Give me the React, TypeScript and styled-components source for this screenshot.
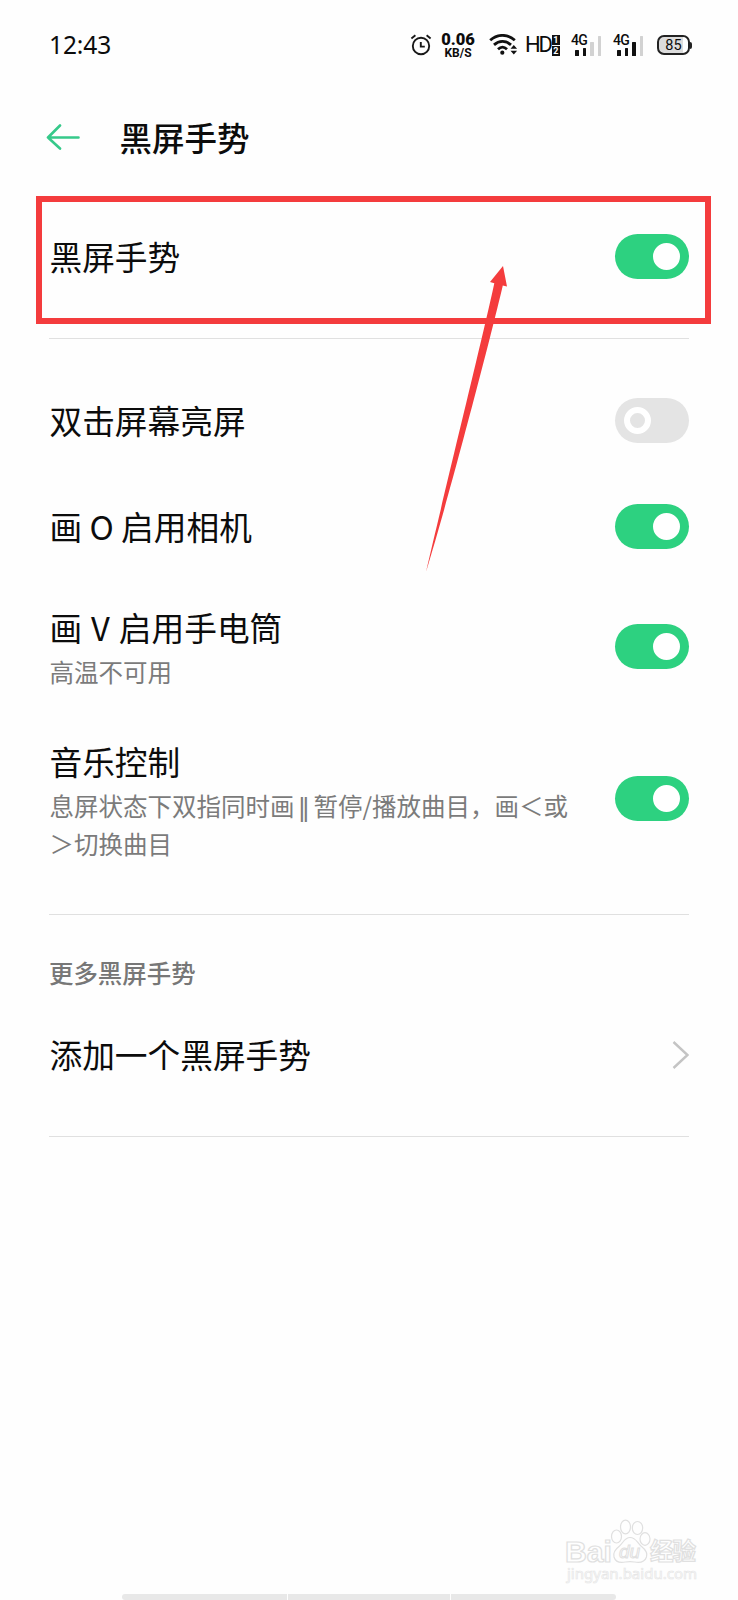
import React, { useState } from "react";
import styled, { createGlobalStyle, css } from "styled-components";

const GlobalStyle = createGlobalStyle`
  *, *::before, *::after { box-sizing: border-box; }
  body {
    margin: 0;
    background: #fefefe;
    color: #0c0c0c;
    font-family: "Noto Sans CJK SC", "Noto Sans", sans-serif;
  }
`;

const Screen = styled.main`
  position: relative;
  display: flex;
  flex-direction: column;
  width: 738px;
  height: 1600px;
  overflow: hidden;
  background: #fefefe;
`;

const StatusBar = styled.header`
  display: flex;
  align-items: center;
  justify-content: space-between;
  height: 90px;
  padding: 0 46px 0 49px;
`;

const Clock = styled.time`
  font: 400 24.5px/30px "Noto Sans", sans-serif;
  letter-spacing: -0.1px;
`;

const Indicators = styled.div`
  display: flex;
  align-items: center;
`;

const NetSpeed = styled.div`
  display: flex;
  flex-direction: column;
  align-items: center;
  width: 34px;
  margin: 1px 14px 0 9px;
  font: 700 12px/12px Roboto, sans-serif;
  strong {
    font-size: 16.5px;
    line-height: 14px;
  }
`;

const Voice = styled.div`
  display: flex;
  align-items: center;
  width: 35px;
  margin: 0 11px 0 6px;
  font: 400 22px/24px Roboto, sans-serif;
  letter-spacing: -2.2px;
`;

const SimSlots = styled.div`
  display: flex;
  flex-direction: column;
  gap: 1px;
  margin-left: 1px;
  letter-spacing: 0;
`;

const SimSlot = styled.span`
  width: 8px;
  height: 10px;
  background: #111;
  color: #fff;
  font: 700 9px/10px Roboto, sans-serif;
  text-align: center;
`;

const Signal = styled.div`
  display: grid;
  width: 32px;
  height: 22px;
  margin-right: 10px;
  > * { grid-area: 1 / 1; }
`;

const SignalType = styled.span`
  font: 500 14px/12px Roboto, sans-serif;
  letter-spacing: -0.8px;
`;

const SignalBars = styled.div`
  display: flex;
  align-items: flex-end;
  align-self: end;
  gap: 4px;
  padding-left: 4px;
`;

const Bar = styled.i<{ $h: number; $on: boolean }>`
  width: 3.6px;
  height: ${(p) => p.$h}px;
  border-radius: 0.5px;
  background: ${(p) => (p.$on ? "#111" : "#d2d2d2")};
`;

const Battery = styled.div`
  display: flex;
  align-items: center;
  margin-left: 2px;
  &::after {
    content: "";
    width: 2px;
    height: 7px;
    border-radius: 0 2px 2px 0;
    background: #222;
  }
`;

const BatteryBody = styled.span`
  width: 33px;
  height: 20px;
  border: 2px solid #222;
  border-radius: 7px;
  background: linear-gradient(90deg, #dcdcdc 83%, #fff 83%);
  font: 400 14.5px/17px Roboto, sans-serif;
  text-align: center;
`;

const TitleBar = styled.div`
  display: flex;
  align-items: center;
  height: 94px;
  padding: 0 46px;
  gap: 39.4px;
`;

const BackButton = styled.button`
  display: flex;
  padding: 0;
  border: 0;
  background: none;
`;

const PageTitle = styled.h1`
  margin: -1px 0 0;
  font-size: 32.5px;
  font-weight: 500;
  line-height: 48px;
`;

const Group = styled.section<{ $top?: number; $bottom?: number }>`
  margin: 0 49px;
  padding: ${(p) => p.$top ?? 0}px 0 ${(p) => p.$bottom ?? 0}px;
  border-bottom: 1px solid #e0e0e0;
`;

const Row = styled.div<{ $height: number }>`
  display: flex;
  align-items: center;
  justify-content: space-between;
  height: ${(p) => p.$height}px;
`;

const Labels = styled.div<{ $double?: boolean }>`
  display: flex;
  flex-direction: column;
  gap: 3px;
  margin-top: -2px;
  ${(p) => p.$double && css`margin: 0 0 -2px;`}
`;

const Label = styled.span`
  padding-left: 0.5px;
  font-size: 32.7px;
  line-height: 47px;
  white-space: nowrap;
`;

const Letter = styled.span`
  display: inline-block;
  min-width: 22px;
  text-align: center;
`;

const Hint = styled.span`
  padding-left: 0.4px;
  color: #7b7b7b;
  font-size: 24.5px;
  line-height: 38px;
  white-space: nowrap;
`;

const PauseGlyph = styled.span`
  display: inline-block;
  width: 19px;
  font-family: "DejaVu Sans", sans-serif;
  line-height: 30px;
  text-align: center;
`;

const SectionTitle = styled.h2`
  margin: 0;
  color: #777;
  font-size: 24.45px;
  font-weight: 500;
  line-height: 36px;
`;

const Switch = styled.button<{ $on: boolean }>`
  display: flex;
  flex: none;
  align-items: center;
  justify-content: ${(p) => (p.$on ? "flex-end" : "flex-start")};
  width: 74px;
  height: 45px;
  padding: 0 9px;
  border: 0;
  border-radius: 23px;
  background: ${(p) => (p.$on ? "#2dd180" : "#e4e4e4")};
  &::after {
    content: "";
    width: 27px;
    height: 27px;
    border: 6px solid #fff;
    border-radius: 50%;
    background: ${(p) => (p.$on ? "#fff" : "transparent")};
  }
`;

const Highlight = styled.div`
  position: absolute;
  left: 36px;
  top: 196px;
  width: 675px;
  height: 128px;
  border: 6px solid #f43c3d;
`;

const Pointer = styled.svg`
  position: absolute;
  left: 410px;
  top: 250px;
`;

const Watermark = styled.svg`
  position: absolute;
  left: 550px;
  top: 1500px;
`;

const BottomStrip = styled.footer`
  display: flex;
  gap: 1.5px;
  height: 6px;
  margin: auto 0 0 122px;
`;

const Segment = styled.i<{ $width: number }>`
  width: ${(p) => p.$width}px;
  background: #e8e8e8;
  &:first-child { border-radius: 3px 0 0 3px; }
  &:last-child { border-radius: 0 3px 3px 0; }
`;

function Toggle({ initial = true, label }: { initial?: boolean; label: string }) {
  const [on, setOn] = useState(initial);
  return <Switch $on={on} role="switch" aria-checked={on} aria-label={label} onClick={() => setOn(!on)} />;
}

function Setting({
  name,
  title = name,
  hint,
  height,
  initial,
}: {
  name: string;
  title?: React.ReactNode;
  hint?: React.ReactNode;
  height: number;
  initial?: boolean;
}) {
  return (
    <Row $height={height}>
      <Labels $double={!!hint}>
        <Label>{title}</Label>
        {hint && <Hint>{hint}</Hint>}
      </Labels>
      <Toggle initial={initial} label={name} />
    </Row>
  );
}

function MobileSignal({ level }: { level: number }) {
  return (
    <Signal>
      <SignalType>4G</SignalType>
      <SignalBars>
        {[6, 8, 14, 20].map((h, i) => (
          <Bar key={h} $h={h} $on={i < level} />
        ))}
      </SignalBars>
    </Signal>
  );
}

function AlarmIcon() {
  return (
    <svg width="22" height="22" viewBox="0 0 22 22" fill="none" stroke="#181818" strokeWidth="1.9">
      <circle cx="11" cy="12" r="8.2" />
      <path d="M10.8 8v4.6h4M1.4 4.5l4-3.2M20.6 4.5l-4-3.2" />
    </svg>
  );
}

function WifiIcon() {
  return (
    <svg width="30" height="22" viewBox="0 0 30 22" fill="none" stroke="#111" strokeWidth="2.8">
      <path d="M1.2 6.3C8.5-.3 18.5-.3 25.8 6.3M5 10.9c5-4.6 12-4.6 17 0M9 15.2c2.8-2.6 6.2-2.6 9 0" />
      <circle cx="13.3" cy="18.7" r="2.1" fill="#111" stroke="none" />
      <path d="M21.5 14.7l3.3-3.7 3.3 3.7zM21.5 16.8l3.3 3.7 3.3-3.7z" fill="#111" stroke="none" />
    </svg>
  );
}

export default function App() {
  return (
    <>
      <GlobalStyle />
      <Screen>
        <StatusBar>
          <Clock>12:43</Clock>
          <Indicators>
            <AlarmIcon />
            <NetSpeed>
              <strong>0.06</strong>
              <span>KB/S</span>
            </NetSpeed>
            <WifiIcon />
            <Voice>
              HD
              <SimSlots>
                <SimSlot>1</SimSlot>
                <SimSlot>2</SimSlot>
              </SimSlots>
            </Voice>
            <MobileSignal level={2} />
            <MobileSignal level={3} />
            <Battery>
              <BatteryBody>85</BatteryBody>
            </Battery>
          </Indicators>
        </StatusBar>

        <TitleBar>
          <BackButton aria-label="返回">
            <svg width="34" height="26" viewBox="0 0 34 26" fill="none" stroke="#36c98a" strokeWidth="2.6" strokeLinecap="round" strokeLinejoin="round">
              <path d="M14 1.5L2 13.5l12 11M2 13.5h30.5" />
            </svg>
          </BackButton>
          <PageTitle>黑屏手势</PageTitle>
        </TitleBar>

        <Group $bottom={9}>
          <Setting name="黑屏手势" height={145} />
        </Group>

        <Group $top={28} $bottom={29}>
          <Setting name="双击屏幕亮屏" height={106} initial={false} />
          <Setting name="画 O 启用相机" height={107} />
          <Setting
            name="画 V 启用手电筒"
            title={<>画 <Letter>V</Letter> 启用手电筒</>}
            hint="高温不可用"
            height={132}
          />
          <Setting
            name="音乐控制"
            height={173}
            hint={
              <>
                息屏状态下双指同时画<PauseGlyph>‖</PauseGlyph>暂停/播放曲目，画＜或
                <br />
                ＞切换曲目
              </>
            }
          />
        </Group>

        <Group $top={40} $bottom={18}>
          <SectionTitle>更多黑屏手势</SectionTitle>
          <Row $height={127}>
            <Labels>
              <Label>添加一个黑屏手势</Label>
            </Labels>
            <svg width="17" height="28" viewBox="0 0 17 28" fill="none" stroke="#c4c4c4" strokeWidth="2.4">
              <path d="M1.5 1L15.5 14 1.5 27" />
            </svg>
          </Row>
        </Group>

        <BottomStrip>
          <Segment $width={164.5} />
          <Segment $width={161.5} />
          <Segment $width={165} />
        </BottomStrip>

        <Highlight />
        <Pointer width="120" height="340" viewBox="0 0 120 340" fill="#f43c3d">
          <path d="M93 16L80 32l4.3 1.2C74 82 35 240 16 322 41 240 80 90 92.800 35.400l4.200 1.100z" />
        </Pointer>
        <Watermark width="188" height="100" viewBox="0 0 188 100" fill="#fefefe" stroke="#e0e0e0" strokeWidth="1.2">
          <text x="15" y="61.5" fontFamily="Liberation Sans, sans-serif" fontWeight="700" fontSize="30" textLength="47" lengthAdjust="spacingAndGlyphs">Bai</text>
          <ellipse cx="66.5" cy="36.5" rx="5" ry="6.5" />
          <ellipse cx="75.5" cy="27" rx="5" ry="6.8" />
          <ellipse cx="87.5" cy="28" rx="5.2" ry="6.5" />
          <ellipse cx="95" cy="39" rx="5" ry="6.3" />
          <path d="M80 37.5c6 0 7 5 11 8.5 5 4 7 7 5.5 11-2 5.5-7 6-12 5-3-.6-6-.6-9 0-5 1-10 0-11.5-5-1.2-4 1-7.500 5.500-11 4-3.500 5-8.500 10.500-8.500z" />
          <text x="69" y="58" fontFamily="Liberation Sans, sans-serif" fontStyle="italic" fontSize="19" textLength="21" strokeWidth="1">du</text>
          <text x="100" y="60" fontFamily="Noto Sans CJK SC, sans-serif" fontWeight="700" fontSize="23.5" textLength="46">经验</text>
          <text x="17" y="79" fontFamily="Noto Sans, sans-serif" fontSize="15" textLength="130" stroke="#e6e6e6" strokeWidth="0.7">jingyan.baidu.com</text>
        </Watermark>
      </Screen>
    </>
  );
}
